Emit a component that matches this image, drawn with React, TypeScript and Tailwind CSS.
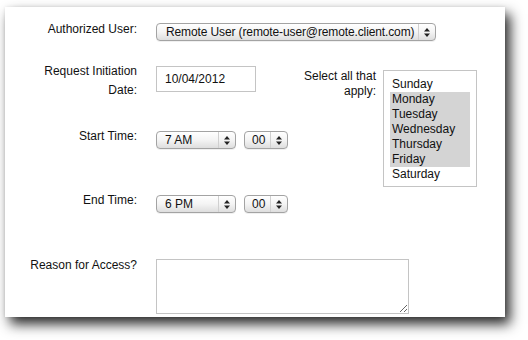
import React from 'react';

const days = ['Sunday', 'Monday', 'Tuesday', 'Wednesday', 'Thursday', 'Friday', 'Saturday'];
const selectedDays = ['Monday', 'Tuesday', 'Wednesday', 'Thursday', 'Friday'];

function Arrows() {
  return (
    <svg width="6" height="9" viewBox="0 0 6 9" className="block">
      <path d="M3 0 L6 3.5 L0 3.5 Z" fill="#222" />
      <path d="M0 5.5 L6 5.5 L3 9 Z" fill="#222" />
    </svg>
  );
}

function FakeSelect({ value, width, padLeft }: { value: string; width: string; padLeft: string }) {
  return (
    <div
      className={`${width} h-[18px] shrink-0 flex items-stretch rounded-[4px] border border-[#a3a3a3] bg-gradient-to-b from-[#ffffff] via-[#f4f4f4] to-[#dedede] shadow-[0_1px_0_rgba(0,0,0,0.06)]`}
    >
      <span className={`flex-1 ${padLeft} leading-[16px] whitespace-nowrap`}>{value}</span>
      <span className="w-[17px] shrink-0 border-l border-[#d0d0d0] flex items-center justify-center">
        <Arrows />
      </span>
    </div>
  );
}

export default function App() {
  return (
    <div
      className="w-[528px] h-[340px] bg-white overflow-hidden text-[12px] text-[#111]"
      style={{ fontFamily: '"Liberation Sans", Helvetica, Arial, sans-serif' }}
    >
      <div className="ml-[5px] mt-[7px] w-[500px] h-[310px] bg-white pt-[16px] shadow-[5px_7px_12px_rgba(0,0,0,0.85),0_0_3px_rgba(0,0,0,0.08)]">
        {/* Authorized user */}
        <div className="flex items-start">
          <label className="w-[132px] shrink-0 text-right leading-[14px] mt-[-1px]">Authorized User:</label>
          <div className="ml-[19px]">
            <FakeSelect
              value="Remote User (remote-user@remote.client.com)"
              width="w-[280px] tracking-[-0.12px]"
              padLeft="pl-[9px]"
            />
          </div>
        </div>

        {/* Middle block */}
        <div className="flex items-start mt-[25px]">
          <div className="w-[251px] shrink-0">
            <div className="flex items-start">
              <label className="w-[132px] shrink-0 text-right leading-[19px] mt-[-4px]">
                Request Initiation
                <br />
                Date:
              </label>
              <input
                defaultValue="10/04/2012"
                className="ml-[19px] w-[100px] h-[26px] shrink-0 border border-[#c4c4c4] pl-[8px] text-[12px] outline-none"
              />
            </div>

            <div className="flex items-start mt-[31px]">
              <label className="w-[132px] shrink-0 text-right leading-[14px] mt-[-2px]">Start Time:</label>
              <div className="ml-[19px] flex gap-[8px] shrink-0">
                <FakeSelect value="7 AM" width="w-[80px]" padLeft="pl-[8px]" />
                <FakeSelect value="00" width="w-[44px]" padLeft="pl-[7px]" />
              </div>
            </div>

            <div className="flex items-start mt-[46px]">
              <label className="w-[132px] shrink-0 text-right leading-[14px] mt-[-2px]">End Time:</label>
              <div className="ml-[19px] flex gap-[8px] shrink-0">
                <FakeSelect value="6 PM" width="w-[80px]" padLeft="pl-[8px]" />
                <FakeSelect value="00" width="w-[44px]" padLeft="pl-[7px]" />
              </div>
            </div>
          </div>

          <label className="w-[120px] shrink-0 text-right leading-[15px] mt-[3px]">
            Select all that
            <br />
            apply:
          </label>
          <div className="ml-[7px] mt-[4px] w-[94px] h-[117px] shrink-0 border border-[#c4c4c4] p-[6px]">
            {days.map((d) => (
              <div
                key={d}
                className={`leading-[15px] px-[2px] ${selectedDays.includes(d) ? 'bg-[#d4d4d4]' : ''}`}
              >
                {d}
              </div>
            ))}
          </div>
        </div>

        {/* Reason */}
        <div className="flex items-start mt-[46px]">
          <label className="w-[132px] shrink-0 text-right leading-[14px] mt-[-1px]">Reason for Access?</label>
          <textarea className="ml-[19px] w-[253px] h-[55px] shrink-0 border border-[#c4c4c4] outline-none" />
        </div>
      </div>
    </div>
  );
}
